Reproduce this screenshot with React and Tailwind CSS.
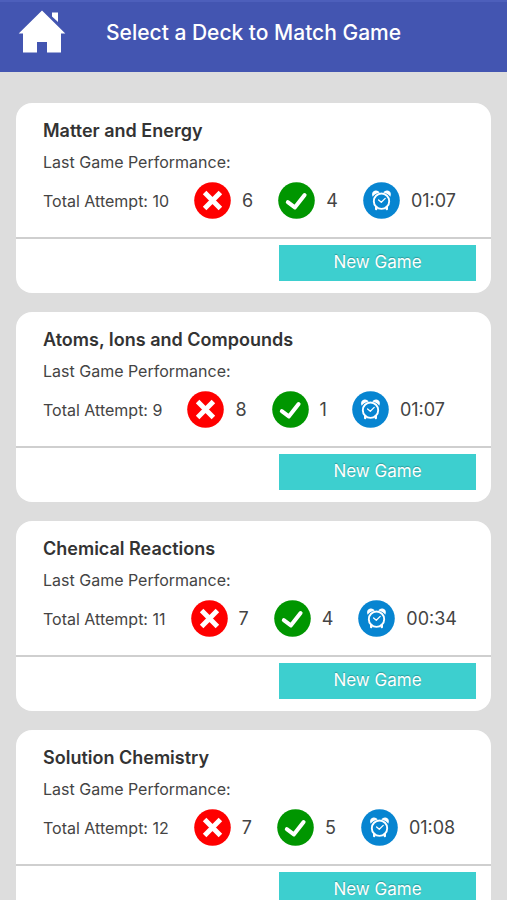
import React from "react";

const decks = [
  { title: "Matter and Energy", attempts: 10, wrong: 6, right: 4, time: "01:07" },
  { title: "Atoms, Ions and Compounds", attempts: 9, wrong: 8, right: 1, time: "01:07" },
  { title: "Chemical Reactions", attempts: 11, wrong: 7, right: 4, time: "00:34" },
  { title: "Solution Chemistry", attempts: 12, wrong: 7, right: 5, time: "01:08" },
];

function HomeIcon() {
  return (
    <svg viewBox="0 0 48 44" className="h-11 w-12" fill="#ffffff" aria-hidden="true">
      <path d="M24 0.5 L47.3 23.5 H43 V42.5 H29 V32 H19 V42.5 H5 V23.5 H0.7 Z" />
      <path d="M34 2.5 H40 V12 L34 6.4 Z" />
    </svg>
  );
}

function WrongIcon() {
  return (
    <svg viewBox="0 0 37 37" className="size-[37px]" role="img" aria-label="Wrong">
      <circle cx="18.5" cy="18.5" r="18.3" fill="#ff0000" />
      <path d="M10.6 10.6 L26.4 26.4 M26.4 10.6 L10.6 26.4" stroke="#ffffff" strokeWidth="5" />
    </svg>
  );
}

function RightIcon() {
  return (
    <svg viewBox="0 0 37 37" className="size-[37px]" role="img" aria-label="Right">
      <circle cx="18.5" cy="18.5" r="18.3" fill="#009600" />
      <path
        d="M9.8 20.2 L16.8 25.4 L26.6 13"
        fill="none"
        stroke="#ffffff"
        strokeWidth="4"
        strokeLinecap="round"
        strokeLinejoin="round"
      />
    </svg>
  );
}

function ClockIcon() {
  return (
    <svg viewBox="0 0 37 37" className="size-[37px]" role="img" aria-label="Time">
      <circle cx="18.5" cy="18.5" r="18.3" fill="#0785d1" />
      <g fill="none" stroke="#ffffff" strokeLinecap="round" strokeLinejoin="round">
        <circle cx="18.5" cy="19.2" r="7.7" strokeWidth="1.9" />
        <path d="M15.6 17.9 L18.3 20.2 L22.2 16.4" strokeWidth="1.3" />
        <path d="M13.2 25 L13.2 27 M23.8 25 L23.8 27" strokeWidth="2.4" />
      </g>
      <path
        d="M9.7 14.8 C8.2 11.6 9.7 8.8 12.6 8.5 C14.5 8.3 16.1 9.4 16.7 10.5 C13.6 11.2 11.2 12.5 9.7 14.8 Z"
        fill="#ffffff"
      />
      <path
        d="M27.3 14.8 C28.8 11.6 27.3 8.8 24.4 8.5 C22.5 8.3 20.9 9.4 20.3 10.5 C23.4 11.2 25.8 12.5 27.3 14.8 Z"
        fill="#ffffff"
      />
    </svg>
  );
}

function Stat({ icon, value }) {
  return (
    <div className="flex items-center gap-[11px]">
      {icon}
      <span className="text-lg leading-6">{value}</span>
    </div>
  );
}

function DeckCard({ deck }) {
  return (
    <article className="shrink-0 overflow-hidden rounded-2xl bg-white text-[#444444]">
      <div className="border-b-2 border-[#cfcfcf] px-[27px] pt-4 pb-[18px]">
        <h2 className="text-lg leading-6 font-semibold text-[#333333]">{deck.title}</h2>
        <p className="mt-[7px] text-base leading-6">Last Game Performance:</p>
        <div className="mt-2 flex items-center gap-[25px] whitespace-nowrap">
          <span className="text-base leading-6">Total Attempt: {deck.attempts}</span>
          <Stat icon={<WrongIcon />} value={deck.wrong} />
          <Stat icon={<RightIcon />} value={deck.right} />
          <Stat icon={<ClockIcon />} value={deck.time} />
        </div>
      </div>
      <div className="flex justify-end px-[15px] pt-1.5 pb-3">
        <button
          type="button"
          className="h-9 w-[197px] bg-[#3dcfcf] pb-0.5 text-[17px] leading-6 text-white [text-shadow:0_-1px_1px_#00000040]"
        >
          New Game
        </button>
      </div>
    </article>
  );
}

export default function App() {
  return (
    <div className="flex h-screen flex-col bg-[#dddddd] font-[Inter,'Liberation_Sans',sans-serif]">
      <header className="flex h-[72px] shrink-0 items-start gap-10 border-t-2 border-[#4d5fbb] bg-[#4355b1] px-[18px] pt-2">
        <a href="#home" aria-label="Home">
          <HomeIcon />
        </a>
        <h1 className="pt-[9px] text-[21px] leading-7 font-medium text-white">Select a Deck to Match Game</h1>
      </header>
      <main className="flex min-h-0 flex-1 flex-col gap-[19px] overflow-y-auto px-4 py-[31px] [scrollbar-width:none]">
        {decks.map((deck) => (
          <DeckCard key={deck.title} deck={deck} />
        ))}
      </main>
    </div>
  );
}
